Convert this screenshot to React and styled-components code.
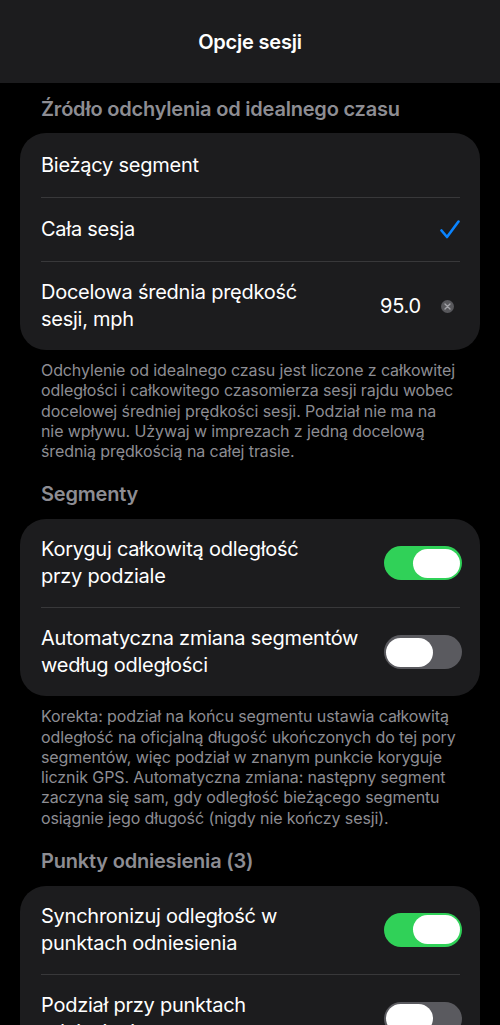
import React from "react";
import styled, { createGlobalStyle } from "styled-components";

const Global = createGlobalStyle`
  body {
    margin: 0;
    background: #000;
    font-family: Inter, "Noto Sans", sans-serif;
    color: #fff;
  }
`;

const Page = styled.div`
  width: 500px;
  min-height: 1025px;
  background: #000;
  overflow: hidden;
`;

const TopBar = styled.header`
  height: 83px;
  background: #1c1c1e;
  display: flex;
  align-items: center;
  justify-content: center;
  font-size: 20px;
  font-weight: 600;
  letter-spacing: -0.2px;
`;

const SectionTitle = styled.h2`
  margin: ${(p) => p.$top}px 0 ${(p) => p.$bottom || 12}px;
  padding: 0 41px;
  font-size: 20px;
  line-height: 24px;
  font-weight: 600;
  color: #8d8d93;
  letter-spacing: -0.2px;
`;

const Card = styled.div`
  margin: 0 20px;
  background: #1c1c1e;
  border-radius: 26px;
  padding: 0 20px 0 21px;
`;

const Row = styled.div`
  display: flex;
  align-items: center;
  gap: 16px;
  min-height: 64px;
  padding: 17px 0;
  box-sizing: border-box;
  & + & {
    border-top: 1px solid #38383a;
  }
`;

const Label = styled.div`
  flex: 1;
  font-size: 20px;
  line-height: 27px;
  letter-spacing: -0.25px;
`;

const Value = styled.span`
  font-size: 20px;
  letter-spacing: -0.25px;
`;

const ClearBtn = styled.span`
  width: 13px;
  height: 13px;
  border-radius: 50%;
  background: #58585c;
  display: flex;
  align-items: center;
  justify-content: center;
  margin: 0 6px 0 4px;
`;

const Track = styled.div`
  width: 78px;
  height: 34px;
  border-radius: 17px;
  background: ${(p) => (p.$on ? "#30d158" : "#5a5a5f")};
  margin-right: -2px;
  display: flex;
  align-items: center;
  justify-content: ${(p) => (p.$on ? "flex-end" : "flex-start")};
  padding: 0 2px;
  box-sizing: border-box;
  flex-shrink: 0;
`;

const Knob = styled.div`
  width: 47px;
  height: 29px;
  border-radius: 15px;
  background: #fff;
`;

const Footer = styled.p`
  margin: 10px 0 0;
  padding: 0 42px 0 41px;
  font-size: 16px;
  line-height: 20.25px;
  color: #8d8d93;
  letter-spacing: -0.1px;
`;

const Toggle = ({ on }) => (
  <Track $on={on}>
    <Knob />
  </Track>
);

const Check = () => (
  <svg width="20" height="19" viewBox="0 0 20 19" fill="none">
    <path d="M1.5 10.5 L7 17 L18.5 1.5" stroke="#0a84ff" strokeWidth="2.6" strokeLinecap="round" strokeLinejoin="round" />
  </svg>
);

const Lines = ({ lines }) => (
  <Label>
    {lines.map((l, i) => (
      <React.Fragment key={i}>
        {i > 0 && <br />}
        {l}
      </React.Fragment>
    ))}
  </Label>
);

export default function App() {
  return (
    <Page>
      <Global />
      <TopBar>Opcje sesji</TopBar>

      <SectionTitle $top={14}>Źródło odchylenia od idealnego czasu</SectionTitle>
      <Card>
        <Row>
          <Label>Bieżący segment</Label>
        </Row>
        <Row>
          <Label>Cała sesja</Label>
          <Check />
        </Row>
        <Row>
          <Lines lines={["Docelowa średnia prędkość", "sesji, mph"]} />
          <Value>95.0</Value>
          <ClearBtn>
            <svg width="7" height="7" viewBox="0 0 7 7">
              <path d="M1 1 L6 6 M6 1 L1 6" stroke="#a3a3a8" strokeWidth="1.4" strokeLinecap="round" />
            </svg>
          </ClearBtn>
        </Row>
      </Card>
      <Footer>
        Odchylenie od idealnego czasu jest liczone z całkowitej odległości i całkowitego czasomierza sesji
        rajdu wobec docelowej średniej prędkości sesji. Podział nie ma na nie wpływu. Używaj w imprezach z
        jedną docelową średnią prędkością na całej trasie.
      </Footer>

      <SectionTitle $top={21} $bottom={13}>Segmenty</SectionTitle>
      <Card>
        <Row>
          <Lines lines={["Koryguj całkowitą odległość", "przy podziale"]} />
          <Toggle on />
        </Row>
        <Row>
          <Lines lines={["Automatyczna zmiana segmentów", "według odległości"]} />
          <Toggle />
        </Row>
      </Card>
      <Footer>
        Korekta: podział na końcu segmentu ustawia całkowitą odległość na oficjalną długość ukończonych do
        tej pory segmentów, więc podział w znanym punkcie koryguje licznik GPS. Automatyczna zmiana:
        następny segment zaczyna się sam, gdy odległość bieżącego segmentu osiągnie jego długość (nigdy nie
        kończy sesji).
      </Footer>

      <SectionTitle $top={21} $bottom={13}>Punkty odniesienia (3)</SectionTitle>
      <Card>
        <Row>
          <Lines lines={["Synchronizuj odległość w", "punktach odniesienia"]} />
          <Toggle on />
        </Row>
        <Row>
          <Lines lines={["Podział przy punktach", "odniesienia"]} />
          <Toggle />
        </Row>
      </Card>
    </Page>
  );
}
